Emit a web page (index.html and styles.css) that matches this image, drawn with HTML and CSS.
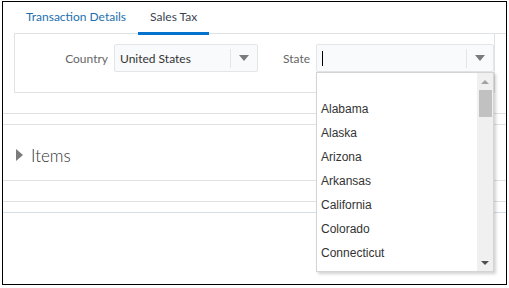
FILE: index.html
```html
<!DOCTYPE html>
<html lang="en">
<head>
    <meta charset="UTF-8">
    <meta name="viewport" content="width=device-width, initial-scale=1.0">
    <title>Sales Tax</title>
    <link rel="stylesheet" href="styles.css">
</head>
<body>
    <div class="frame">
        <div class="tabs">
            <div class="tab">Transaction Details</div>
            <div class="tab selected">Sales Tax</div>
        </div>

        <div class="panel">
            <div class="form-row">
                <label class="label label-country">Country</label>
                <div class="select select-country">
                    <span class="value">United States</span>
                    <span class="arrow-area"><span class="arrow"></span></span>
                </div>

                <label class="label label-state">State</label>
                <div class="select select-state">
                    <span class="value"><span class="caret"></span></span>
                    <span class="arrow-area"><span class="arrow"></span></span>

                    <!-- 州の選択リスト -->
                    <div class="dropdown">
                        <ul class="options">
                            <li></li>
                            <li>Alabama</li>
                            <li>Alaska</li>
                            <li>Arizona</li>
                            <li>Arkansas</li>
                            <li>California</li>
                            <li>Colorado</li>
                            <li>Connecticut</li>
                        </ul>
                        <div class="scrollbar">
                            <span class="scroll-up"></span>
                            <span class="thumb"></span>
                            <span class="scroll-down"></span>
                        </div>
                    </div>
                </div>
            </div>
        </div>

        <div class="separator"></div>

        <div class="section-header">
            <span class="disclosure"></span>
            <span class="section-title">Items</span>
        </div>

        <div class="separator lower"></div>
        <div class="separator last"></div>
    </div>
</body>
</html>
```

FILE: styles.css
```css
body {
    margin: 0;
    font-family: Lato, "Liberation Sans", sans-serif;
    background-color: #fff;
    color: #333;
}

.frame {
    position: relative;
    margin: 1px 2px 0 2px;
    width: 503px;
    height: 282px;
    border: 1px solid #000;
    overflow: hidden;
}

/* タブ */
.tabs {
    display: flex;
    margin-left: 11px;
    height: 31px;
    border-bottom: 1px solid #e0e3e6;
}

.tab {
    padding: 0 12px;
    font-size: 12px;
    line-height: 30px;
    color: #1d6fae;
    border-bottom: 3px solid transparent;
    margin-bottom: -2px;
}

.tab.selected {
    color: #3a4450;
    border-bottom-color: #0572ce;
}

/* フォーム枠 */
.panel {
    margin: 0 11px;
    padding-top: 10px;
    height: 48px;
    border: 1px solid #e0e3e6;
    border-top: none;
}

.form-row {
    display: flex;
    align-items: center;
    height: 28px;
}

.label {
    font-size: 12px;
    color: #666;
    text-align: right;
}

.label-country {
    width: 93px;
    margin-right: 6px;
}

.label-state {
    margin-left: 25px;
    margin-right: 6px;
}

.select {
    position: relative;
    display: flex;
    align-items: center;
    height: 26px;
    border: 1px solid #e3e6e9;
    border-radius: 2px;
    background-color: #f9fafb;
}

.select-country {
    width: 142px;
}

.select-state {
    width: 176px;
}

.value {
    flex: 1;
    padding-left: 5px;
    font-size: 12px;
    color: #333;
}

.caret {
    display: block;
    width: 1px;
    height: 15px;
    background-color: #000;
}

.arrow-area {
    display: flex;
    justify-content: center;
    align-items: center;
    width: 26px;
    height: 19px;
    border-left: 1px solid #e3e6e9;
}

.arrow {
    width: 0;
    height: 0;
    border-left: 5px solid transparent;
    border-right: 5px solid transparent;
    border-top: 6px solid #7b7b7b;
}

/* ドロップダウン */
.dropdown {
    position: absolute;
    top: calc(100% + 1px);
    left: -1px;
    width: 176px;
    height: 198px;
    border: 1px solid #d4d4d4;
    background-color: #fff;
    box-shadow: 2px 2px 3px rgba(0, 0, 0, 0.18);
    display: flex;
    overflow: hidden;
    z-index: 10;
}

.options {
    flex: 1;
    list-style: none;
    margin: 0;
    padding: 0;
    font-family: "Liberation Sans", Arial, sans-serif;
    font-size: 12px;
    color: #333;
}

.options li {
    height: 24px;
    line-height: 24px;
    padding-left: 4px;
}

.scrollbar {
    position: relative;
    width: 16px;
    background-color: #f0f0f0;
}

.scroll-up {
    position: absolute;
    top: 7px;
    left: 4px;
    border-left: 4px solid transparent;
    border-right: 4px solid transparent;
    border-bottom: 4px solid #a3a3a3;
}

.thumb {
    position: absolute;
    top: 17px;
    left: 2px;
    width: 13px;
    height: 27px;
    background-color: #c1c1c1;
}

.scroll-down {
    position: absolute;
    bottom: 6px;
    left: 4px;
    border-left: 4px solid transparent;
    border-right: 4px solid transparent;
    border-top: 4px solid #505050;
}

/* 区切り線 */
.separator {
    margin-top: 20px;
    height: 10px;
    border-top: 1px solid #e0e3e6;
    border-bottom: 1px solid #e0e3e6;
}

.separator.lower {
    margin-top: 0;
    height: 20px;
    border-top: none;
}

.separator.last {
    margin-top: 0;
    height: 10px;
    border-top: none;
    border-bottom-color: #d6dfe8;
}

.section-header {
    display: flex;
    align-items: center;
    height: 50px;
    padding-top: 5px;
    padding-left: 13px;
    border-bottom: 1px solid #e0e3e6;
}

.disclosure {
    width: 0;
    height: 0;
    border-top: 6px solid transparent;
    border-bottom: 6px solid transparent;
    border-left: 7px solid #7b7b7b;
    margin-right: 8px;
}

.section-title {
    font-size: 17px;
    font-weight: 300;
    color: #333;
}
```
